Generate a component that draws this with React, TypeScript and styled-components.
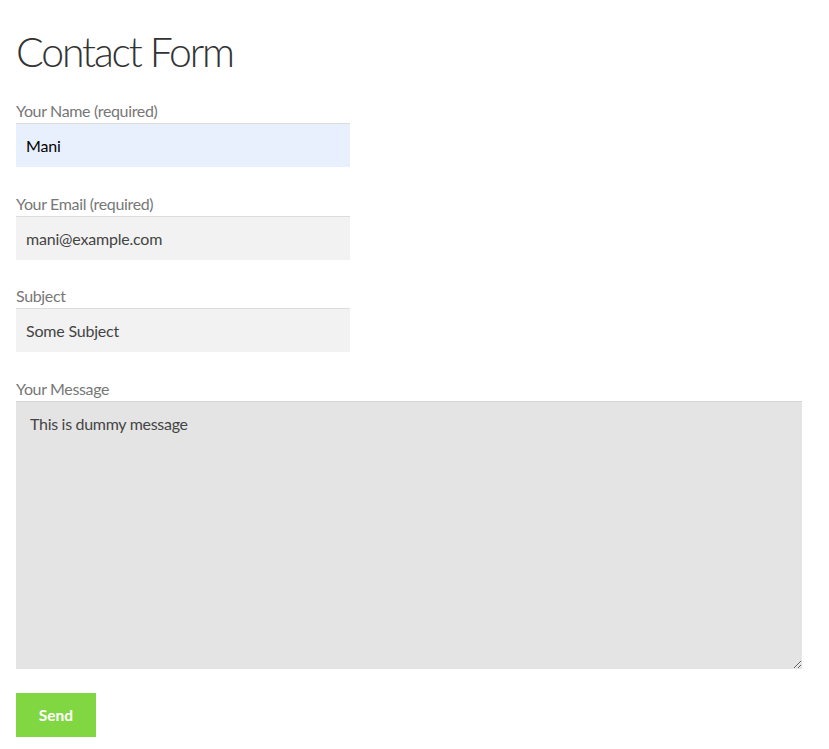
import styled, { createGlobalStyle } from "styled-components";

const GlobalStyle = createGlobalStyle`
  body {
    margin: 0;
    background: #fff;
    font-family: Lato, "Open Sans", sans-serif;
  }
`;

const fields = [
  { label: "Your Name (required)", value: "Mani", autofill: true },
  { label: "Your Email (required)", value: "mani@example.com" },
  { label: "Subject", value: "Some Subject" },
];

const App = () => {
  return (
    <Page>
      <GlobalStyle />
      <Title>Contact Form</Title>
      <Form onSubmit={(e) => e.preventDefault()}>
        {fields.map(({ label, value, autofill }) => (
          <Field key={label}>
            <Label>{label}</Label>
            <Input defaultValue={value} $autofill={autofill} />
          </Field>
        ))}
        <Field>
          <Label>Your Message</Label>
          <Message defaultValue="This is dummy message" />
        </Field>
        <SendButton type="submit">Send</SendButton>
      </Form>
    </Page>
  );
};

const Page = styled.div`
  padding: 23px 16px 16px;
`;
const Title = styled.h1`
  margin: 0 0 18px;
  font-family: Lato, sans-serif;
  font-weight: 300;
  font-size: 41px;
  line-height: 58px;
  letter-spacing: -2.15px;
  color: #333;
`;
const Form = styled.form`
  display: flex;
  flex-direction: column;
  align-items: flex-start;
`;
const Field = styled.div`
  display: flex;
  flex-direction: column;
  margin-bottom: 24.5px;
  width: 100%;
`;
const Label = styled.label`
  font-size: 16px;
  line-height: 24px;
  letter-spacing: -0.35px;
  color: #777;
`;
const Input = styled.input<{ $autofill?: boolean }>`
  box-sizing: border-box;
  width: 334px;
  height: 44px;
  padding: 0 10px;
  border: none;
  border-top: 1px solid #dcdcdc;
  background: ${(p) => (p.$autofill ? "#e8f0fe" : "#f2f2f2")};
  font-family: Lato, sans-serif;
  font-size: 16px;
  letter-spacing: -0.2px;
  color: ${(p) => (p.$autofill ? "#000" : "#444")};
  outline: none;
`;
const Message = styled.textarea`
  box-sizing: border-box;
  width: 786px;
  height: 268px;
  padding: 12px 14px;
  border: none;
  border-top: 1px solid #d4d4d4;
  background: #e4e4e4;
  font-family: Lato, sans-serif;
  font-size: 16px;
  line-height: 20px;
  letter-spacing: -0.3px;
  color: #444;
  outline: none;
`;
const SendButton = styled.button`
  width: 80px;
  height: 44px;
  border: none;
  background: #81d742;
  color: #fff;
  font-family: Lato, sans-serif;
  font-weight: 700;
  font-size: 15.5px;
  cursor: pointer;
`;

export default App;
